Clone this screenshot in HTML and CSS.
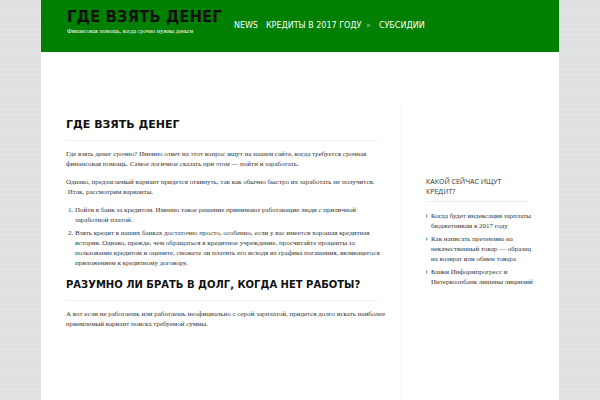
FILE: index.html
```
<!DOCTYPE html>
<html lang="ru">
<head>
  <meta charset="UTF-8">
  <title>Где взять денег</title>
  <link rel="stylesheet" href="styles.css">
</head>
<body>

  <div class="wrapper">
    <header class="header">
      <div class="brand">
        <a class="logo" href="#">ГДЕ ВЗЯТЬ ДЕНЕГ</a>
        <p class="tagline">Финансовая помощь, когда срочно нужны деньги</p>
      </div>
      <nav class="menu">
        <a href="#">NEWS</a>
        <a href="#">КРЕДИТЫ В 2017 ГОДУ <span class="arrow">»</span></a>
        <a href="#">СУБСИДИИ</a>
      </nav>
    </header>

    <div class="columns">
      <main class="content">
        <h1>ГДЕ ВЗЯТЬ ДЕНЕГ</h1>
        <p>Где взять денег срочно? Именно ответ на этот вопрос ищут на нашем сайте, когда требуется срочная<br>
        финансовая помощь. Самое логичное сказать при этом — пойти и заработать.</p>
        <p>Однако, предлагаемый вариант придется откинуть, так как обычно быстро их заработать не получится.<br>
        &nbsp;Итак, рассмотрим варианты.</p>
        <ol>
          <li>Пойти в банк за кредитом. Именно такое решение принимают работающие люди с приличной<br>
          заработной платой.</li>
          <li>Взять кредит в наших банках достаточно просто, особенно, если у вас имеется хорошая кредитная<br>
          история. Однако, прежде, чем обращаться в кредитное учреждение, просчитайте проценты за<br>
          пользование кредитом и оцените, сможете ли платить его исходя из графика погашения, являющегося<br>
          приложением к кредитному договору.</li>
        </ol>
        <h2>РАЗУМНО ЛИ БРАТЬ В ДОЛГ, КОГДА НЕТ РАБОТЫ?</h2>
        <p>А вот если не работаешь или работаешь неофициально с серой зарплатой, придется долго искать наиболее<br>
        приемлемый вариант поиска требуемой суммы.</p>
      </main>

      <aside class="sidebar">
        <h3>КАКОЙ СЕЙЧАС ИЩУТ<br>КРЕДИТ?</h3>
        <ul>
          <li><a href="#">Когда будет индексация зарплаты<br>бюджетникам в 2017 году</a></li>
          <li><a href="#">Как написать претензию на<br>некачественный товар — образец<br>на возврат или обмен товара</a></li>
          <li><a href="#">Банки Информпрогресс и<br>Интеркоопбанк лишены лицензий</a></li>
        </ul>
      </aside>
    </div>
  </div>

</body>
</html>
```
FILE: styles.css
```
* {
  box-sizing: border-box;
}
body {
  margin: 0;
  padding: 0 41px;
  font-family: "Liberation Serif", serif;
  font-size: 7px;
  line-height: 10px;
  color: #333;
  background-color: #dddfe1;
  background-image:
    repeating-linear-gradient(0deg, rgba(255, 255, 255, 0.1) 0 1px, transparent 1px 5px),
    repeating-linear-gradient(90deg, rgba(255, 255, 255, 0.1) 0 1px, transparent 1px 4px);
}
a {
  color: inherit;
  text-decoration: none;
}
.wrapper {
  min-height: 100vh;
  display: flex;
  flex-direction: column;
  background: #fff;
}
.header {
  display: flex;
  align-items: flex-start;
  gap: 12px;
  height: 52px;
  padding: 8px 26px 0;
  background: #008000;
}
.brand {
  white-space: nowrap;
}
.logo {
  display: block;
  font: bold 15px/18px "DejaVu Sans", sans-serif;
  color: #111;
}
.tagline {
  margin: 0;
  font-size: 6px;
  color: #fff;
}
.menu {
  display: flex;
  gap: 8px;
  padding-top: 13px;
  font: 8px/10px "DejaVu Sans", sans-serif;
  color: #fff;
  white-space: nowrap;
}
.arrow {
  margin-left: 2px;
  color: #8fca8f;
}
.columns {
  flex: 1;
  display: flex;
  padding-top: 52px;
}
.content {
  flex: 1;
  min-width: 0;
  padding: 13px 22px 0 25px;
  white-space: nowrap;
}
.content h1,
.content h2 {
  margin: 0 0 8px;
  padding-bottom: 7px;
  border-bottom: 1px solid #f2f2f2;
  font: bold 11px/16px "DejaVu Sans", sans-serif;
  color: #111;
}
.content h2 {
  font-size: 10px;
}
.content p {
  margin: 0 0 8px;
}
.content ol {
  margin: 0 0 9px;
  padding-left: 9px;
}
.content li {
  margin-bottom: 3px;
}
.sidebar {
  flex: 0 0 158px;
  min-width: 0;
  padding: 73px 31px 0 24px;
  border-left: 1px solid #f2f2f2;
  white-space: nowrap;
}
.sidebar h3 {
  margin: 0 0 9px;
  padding-bottom: 4px;
  border-bottom: 1px solid #eee;
  font: 7px/10px "Open Sans", sans-serif;
}
.sidebar ul {
  margin: 0;
  padding: 0;
  list-style: none;
}
.sidebar li {
  position: relative;
  margin-bottom: 3px;
  padding-left: 5px;
}
.sidebar li::before {
  content: "";
  position: absolute;
  left: 0;
  top: 3px;
  border: 2px solid transparent;
  border-left-color: #7ab0b5;
}
```
